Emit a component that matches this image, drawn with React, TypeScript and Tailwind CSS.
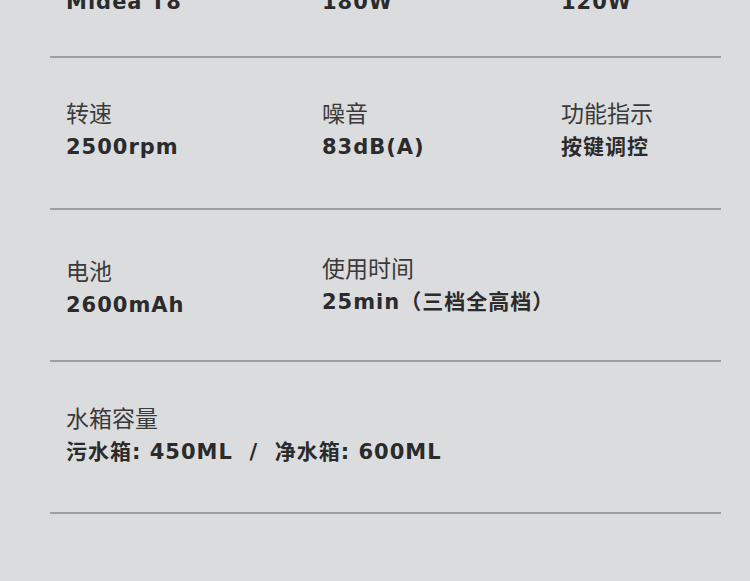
import React from 'react'

type Spec = { label: string; value: string; shift?: boolean }

const rows: { pad: string; items: Spec[] }[] = [
  {
    pad: 'pt-[41px]',
    items: [
      { label: '转速', value: '2500rpm' },
      { label: '噪音', value: '83dB(A)' },
      { label: '功能指示', value: '按键调控' },
    ],
  },
  {
    pad: 'pt-[47px]',
    items: [
      { label: '电池', value: '2600mAh' },
      { label: '使用时间', value: '25min（三档全高档）', shift: true },
    ],
  },
  {
    pad: 'pt-[42px]',
    items: [{ label: '水箱容量', value: '污水箱: 450ML  /  净水箱: 600ML' }],
  },
]

const labelFont = { fontFamily: '"Noto Sans CJK SC", sans-serif' }
const valueFont = { fontFamily: '"DejaVu Sans", "Noto Sans CJK SC", sans-serif' }

const valueCls = 'text-[21px] font-bold tracking-[1px] leading-[26px] whitespace-pre'

const Divider = () => <div className="h-[2px] bg-[#9d9e9f]" />

export default function App() {
  return (
    <div className="w-[750px] h-[581px] overflow-hidden bg-[#dbdcde] text-[#2b2b2b]">
      <div className="ml-[50px] mr-[29px]">
        <div className="h-[56px] flex flex-col">
          <div className="-mt-[11px] pl-4 grid grid-cols-[256px_239px_1fr]">
            <p className={valueCls} style={valueFont}>Midea T8</p>
            <p className={valueCls} style={valueFont}>180W</p>
            <p className={valueCls} style={valueFont}>120W</p>
          </div>
        </div>
        <Divider />
        {rows.map((row, i) => (
          <div key={i}>
            <div className={`h-[150px] pl-4 grid grid-cols-[256px_239px_1fr] ${row.pad}`}>
              {row.items.map((item) => (
                <div key={item.label} className={item.shift ? '-mt-[3px]' : ''}>
                  <p className="text-[23px] leading-[27px] text-[#3a3a3a]" style={labelFont}>
                    {item.label}
                  </p>
                  <p className={`mt-[8px] ${valueCls}`} style={valueFont}>
                    {item.value}
                  </p>
                </div>
              ))}
            </div>
            <Divider />
          </div>
        ))}
      </div>
    </div>
  )
}
